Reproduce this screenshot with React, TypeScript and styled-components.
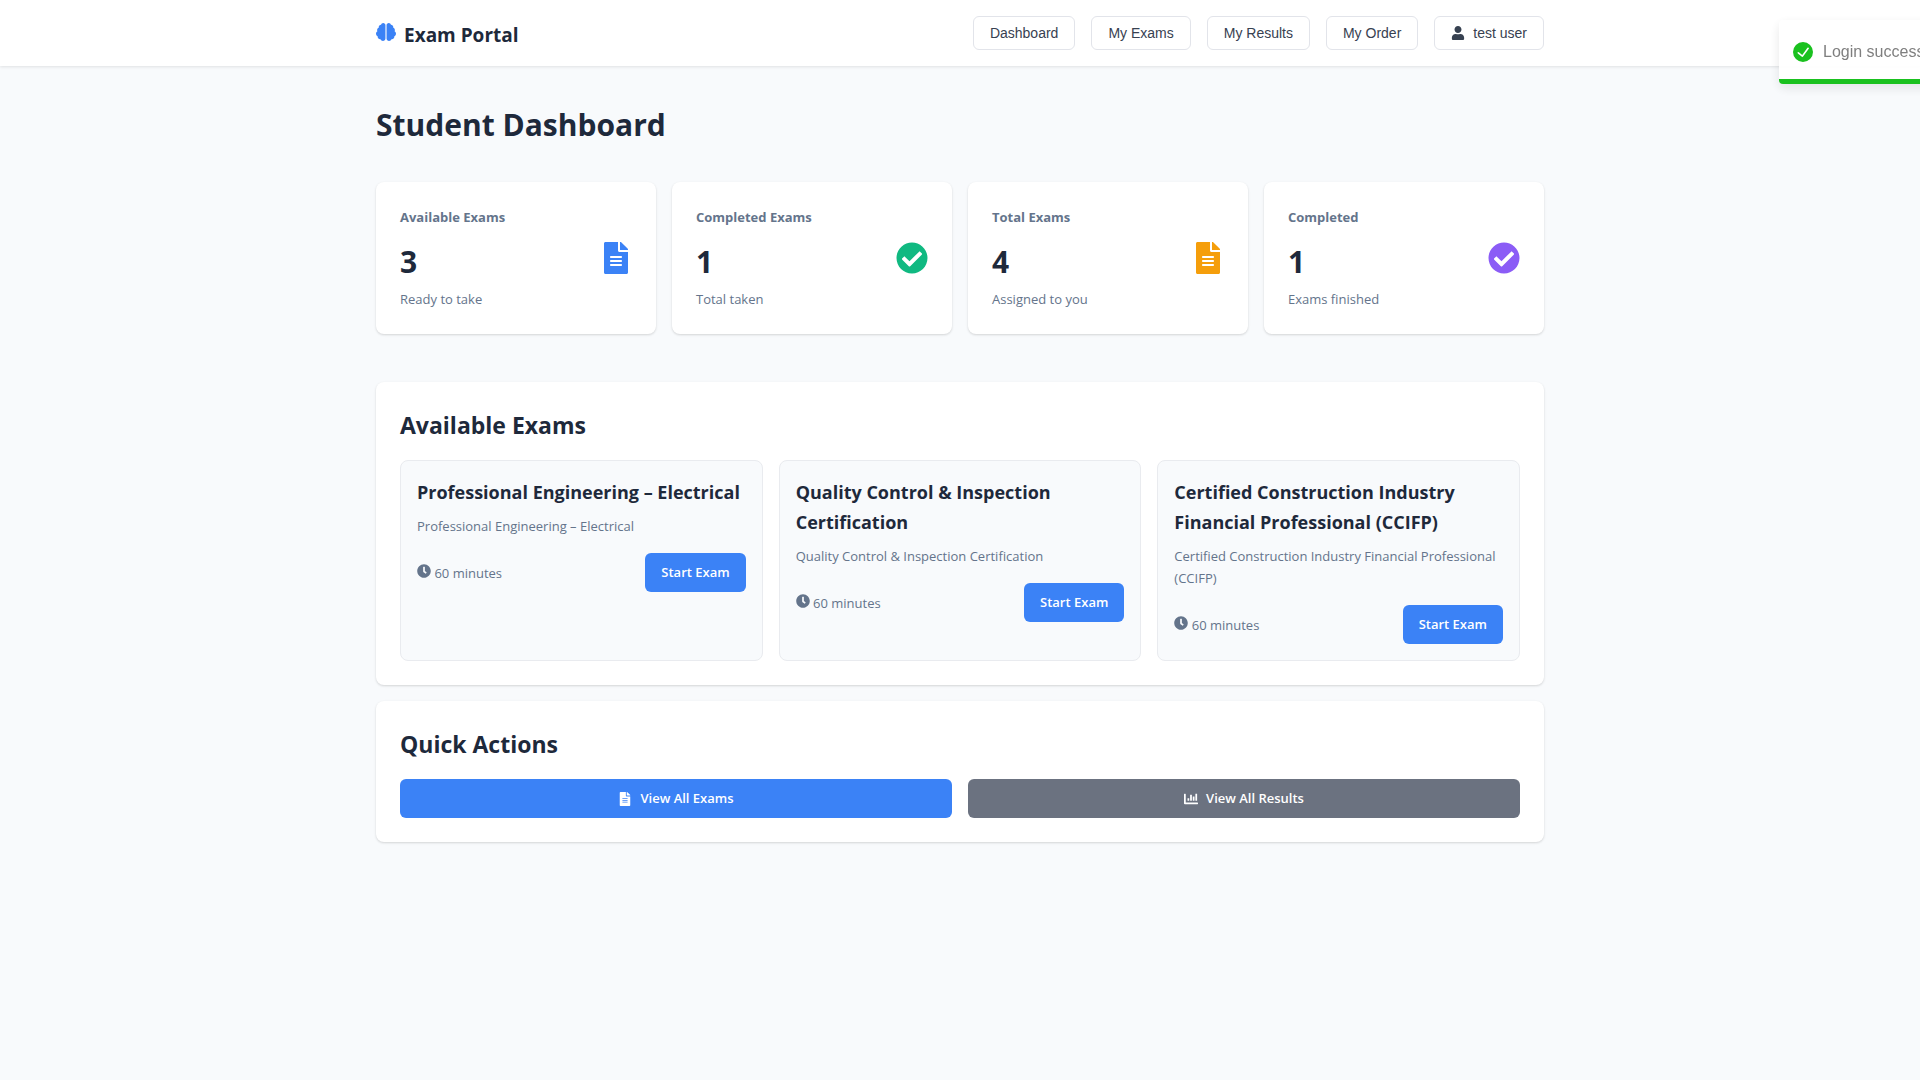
import React from "react";
import styled, { createGlobalStyle } from "styled-components";
import {
  FaBrain,
  FaChartBar,
  FaCheckCircle,
  FaClock,
  FaFileAlt,
  FaUser,
} from "react-icons/fa";
import type { IconType } from "react-icons";

const GlobalStyle = createGlobalStyle`
  *, *::before, *::after { box-sizing: border-box; }
  body {
    margin: 0;
    min-height: 100vh;
    overflow-x: hidden;
    background: #f8fafc;
    color: #1e293b;
    font-family: "Segoe UI", "Open Sans", "Noto Sans", sans-serif;
    font-size: 13px;
    line-height: 22px;
  }
  h1, h2, h3, p { margin: 0; }
`;

const Header = styled.header`
  background: #fff;
  box-shadow: 0 1px 3px rgba(0, 0, 0, 0.1);
`;

const HeaderInner = styled.div`
  display: flex;
  align-items: center;
  justify-content: space-between;
  max-width: 1200px;
  margin: 0 auto;
  padding: 16px;
`;

const Brand = styled.a`
  display: flex;
  align-items: baseline;
  gap: 8px;
  padding-top: 4px;
  color: #1e293b;
  font-size: 19px;
  font-weight: 700;
  line-height: 30px;
  text-decoration: none;

  svg {
    width: 20px;
    height: 20px;
    color: #3b82f6;
  }
`;

const Nav = styled.nav`
  display: flex;
  gap: 16px;
`;

const NavButton = styled.button`
  display: flex;
  align-items: center;
  gap: 8px;
  padding: 8px 16px;
  border: 1px solid #e2e4ea;
  border-radius: 6px;
  background: #fff;
  color: #374151;
  font-family: Arial, "Liberation Sans", sans-serif;
  font-size: 14px;
  line-height: 16px;
  cursor: pointer;
`;

const Main = styled.main`
  max-width: 1200px;
  margin: 0 auto;
  padding: 32px 16px;
`;

const PageTitle = styled.h1`
  margin-bottom: 30px;
  font-size: 30px;
  font-weight: 700;
  line-height: 54px;
`;

const Card = styled.section`
  padding: 24px;
  border-radius: 8px;
  background: #fff;
  box-shadow: 0 1px 3px rgba(0, 0, 0, 0.1), 0 1px 2px rgba(0, 0, 0, 0.06);
`;

const Grid = styled.div<{ $columns: number }>`
  display: grid;
  grid-template-columns: repeat(${(p) => p.$columns}, minmax(0, 1fr));
  gap: 16px;
`;

const StatsGrid = styled(Grid)`
  margin-bottom: 48px;
`;

const StatCard = styled(Card)`
  display: flex;
  align-items: center;
  justify-content: space-between;
`;

const StatLabel = styled.h3`
  margin-bottom: 8px;
  color: #64748b;
  font-size: 13px;
  font-weight: 700;
  line-height: 22px;
`;

const StatValue = styled.p`
  font-size: 30px;
  font-weight: 700;
  line-height: 52px;
`;

const Muted = styled.p`
  color: #64748b;
`;

const StatIcon = styled.span<{ $color: string }>`
  display: flex;
  color: ${(p) => p.$color};
  font-size: 32px;
`;

const Sections = styled.div`
  display: grid;
  gap: 16px;
`;

const SectionTitle = styled.h2`
  margin-bottom: 16px;
  font-size: 23px;
  font-weight: 700;
  line-height: 38px;
`;

const ExamCard = styled.article`
  padding: 16px;
  border: 1px solid #e9ebef;
  border-radius: 8px;
  background: #f8fafc;
`;

const ExamTitle = styled.h3`
  margin-bottom: 8px;
  font-size: 18px;
  font-weight: 700;
  line-height: 30px;
`;

const ExamFooter = styled.div`
  display: flex;
  align-items: center;
  justify-content: space-between;
  margin-top: 16px;
`;

const Duration = styled.span`
  color: #64748b;

  svg {
    width: 14px;
    height: 14px;
  }
`;

const Button = styled.button<{ $secondary?: boolean }>`
  display: flex;
  align-items: center;
  justify-content: center;
  gap: 8px;
  padding: 8px 16px;
  border: 0;
  border-radius: 6px;
  background: ${(p) => (p.$secondary ? "#6b7280" : "#3b82f6")};
  color: #fff;
  font-family: inherit;
  font-size: 13px;
  font-weight: 600;
  line-height: 23px;
  cursor: pointer;

  svg {
    width: 14px;
    height: 14px;
  }
`;

const Toast = styled.div`
  position: fixed;
  top: 20px;
  right: -179px;
  display: flex;
  align-items: center;
  gap: 10px;
  width: 320px;
  height: 64px;
  padding: 14px;
  border-radius: 4px;
  overflow: hidden;
  background: #fff;
  box-shadow: 0 4px 12px rgba(0, 0, 0, 0.1);
  color: #757575;
  font-family: Arial, "Liberation Sans", sans-serif;
  font-size: 16px;
  opacity: 0.92;

  svg {
    width: 20px;
    height: 20px;
    fill: #07bc0c;
  }
`;

const ToastProgress = styled.div`
  position: absolute;
  right: 0;
  bottom: 0;
  left: 0;
  height: 5px;
  background: #07bc0c;
`;

interface Stat {
  label: string;
  value: number;
  note: string;
  icon: IconType;
  color: string;
}

const stats: Stat[] = [
  { label: "Available Exams", value: 3, note: "Ready to take", icon: FaFileAlt, color: "#3b82f6" },
  { label: "Completed Exams", value: 1, note: "Total taken", icon: FaCheckCircle, color: "#10b981" },
  { label: "Total Exams", value: 4, note: "Assigned to you", icon: FaFileAlt, color: "#f59e0b" },
  { label: "Completed", value: 1, note: "Exams finished", icon: FaCheckCircle, color: "#8b5cf6" },
];

const exams = [
  { name: "Professional Engineering – Electrical", minutes: 60 },
  { name: "Quality Control & Inspection Certification", minutes: 60 },
  { name: "Certified Construction Industry Financial Professional (CCIFP)", minutes: 60 },
];

const navItems = ["Dashboard", "My Exams", "My Results", "My Order"];

export default function App() {
  return (
    <>
      <GlobalStyle />
      <Header>
        <HeaderInner>
          <Brand href="#">
            <FaBrain />
            Exam Portal
          </Brand>
          <Nav>
            {navItems.map((item) => (
              <NavButton key={item} type="button">
                {item}
              </NavButton>
            ))}
            <NavButton type="button">
              <FaUser />
              test user
            </NavButton>
          </Nav>
        </HeaderInner>
      </Header>

      <Main>
        <PageTitle>Student Dashboard</PageTitle>

        <StatsGrid $columns={4}>
          {stats.map(({ label, value, note, icon: Icon, color }) => (
            <StatCard key={label}>
              <div>
                <StatLabel>{label}</StatLabel>
                <StatValue>{value}</StatValue>
                <Muted>{note}</Muted>
              </div>
              <StatIcon $color={color}>
                <Icon />
              </StatIcon>
            </StatCard>
          ))}
        </StatsGrid>

        <Sections>
          <Card>
            <SectionTitle>Available Exams</SectionTitle>
            <Grid $columns={3}>
              {exams.map((exam) => (
                <ExamCard key={exam.name}>
                  <ExamTitle>{exam.name}</ExamTitle>
                  <Muted>{exam.name}</Muted>
                  <ExamFooter>
                    <Duration>
                      <FaClock /> {exam.minutes} minutes
                    </Duration>
                    <Button type="button">Start Exam</Button>
                  </ExamFooter>
                </ExamCard>
              ))}
            </Grid>
          </Card>

          <Card>
            <SectionTitle>Quick Actions</SectionTitle>
            <Grid $columns={2}>
              <Button type="button">
                <FaFileAlt />
                View All Exams
              </Button>
              <Button type="button" $secondary>
                <FaChartBar />
                View All Results
              </Button>
            </Grid>
          </Card>
        </Sections>
      </Main>

      <Toast role="alert">
        <svg viewBox="0 0 24 24" aria-hidden="true">
          <path d="M12 0a12 12 0 1012 12A12.014 12.014 0 0012 0zm6.927 8.2l-6.845 9.289a1.011 1.011 0 01-1.43.188l-4.888-3.908a1 1 0 111.25-1.562l4.076 3.261 6.227-8.451a1 1 0 111.61 1.183z" />
        </svg>
        Login successful
        <ToastProgress />
      </Toast>
    </>
  );
}
